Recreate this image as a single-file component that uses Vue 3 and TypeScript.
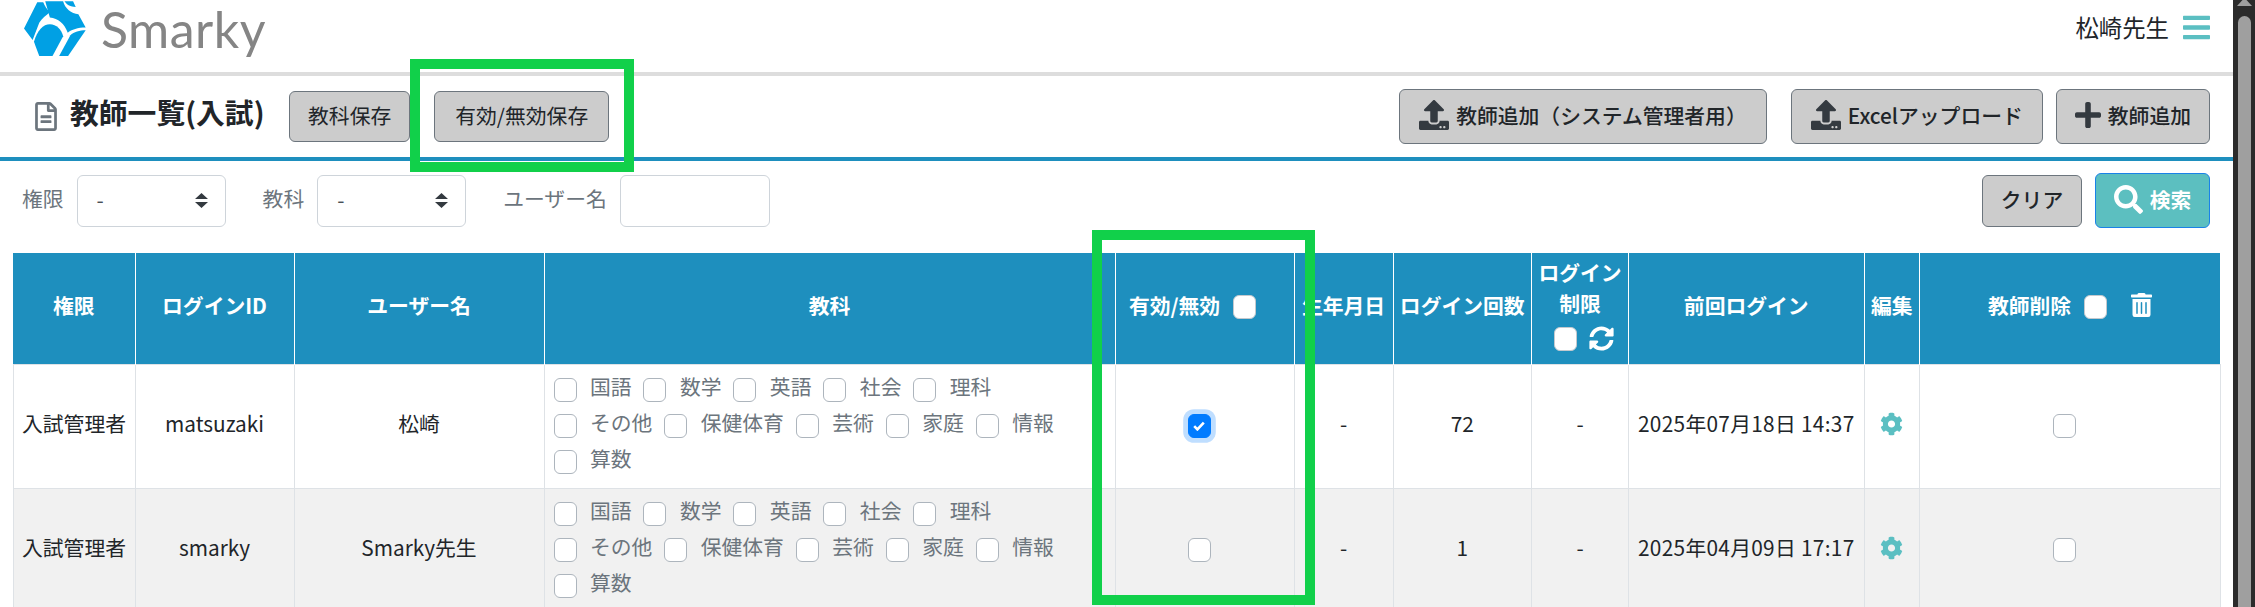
<template>
  <div class="page">
    <div class="main">
      <header class="topbar">
        <div class="logo">
          <svg class="logoMark" viewBox="72 0 190 170">
            <path d="M112 6L130 6C134 16 140 26 150 36C138 46 126 54 118 68L98 120L72 85Z" />
            <path d="M136 3L190 3C195 25 215 40 236 42L258 82C235 82 215 88 204 98C194 70 175 55 150 52C144 32 140 16 136 3Z" />
            <path d="M194 3L220 3L228 20C212 20 202 14 194 3Z" />
            <path d="M102 125C112 90 130 72 150 72C170 72 185 88 190 108L158 168L118 168Z" />
            <path d="M178 168L212 105C222 95 240 90 258 90L205 168Z" />
          </svg>
          <span class="logoText">Smarky</span>
        </div>
        <div class="user">
          <span class="userName">松崎先生</span>
          <svg class="menuIcon" viewBox="0 0 448 512"><path :d="icons.bars" /></svg>
        </div>
      </header>

      <section class="titleBar">
        <svg class="docIcon" viewBox="0 0 384 512"><path :d="icons.file" /></svg>
        <h1 class="title">教師一覧(入試)</h1>
        <button class="btn small first">教科保存</button>
        <button class="btn small second">有効/無効保存</button>
        <div class="grow"></div>
        <button class="btn tall">
          <svg class="upIcon" viewBox="0 0 512 512"><path :d="icons.upload" /></svg>
          教師追加（システム管理者用）
        </button>
        <button class="btn tall excel">
          <svg class="upIcon" viewBox="0 0 512 512"><path :d="icons.upload" /></svg>
          Excelアップロード
        </button>
        <button class="btn tall add">
          <svg class="plusIcon" viewBox="0 0 448 512"><path :d="icons.plus" /></svg>
          教師追加
        </button>
      </section>

      <section class="filters">
        <label class="fieldLabel">権限</label>
        <div class="select">
          <span class="selectValue">-</span>
          <svg class="updown" viewBox="0 0 13 15"><path d="M6.5 0L13 6H0ZM0 9H13L6.5 15Z" /></svg>
        </div>
        <label class="fieldLabel next">教科</label>
        <div class="select">
          <span class="selectValue">-</span>
          <svg class="updown" viewBox="0 0 13 15"><path d="M6.5 0L13 6H0ZM0 9H13L6.5 15Z" /></svg>
        </div>
        <label class="fieldLabel next">ユーザー名</label>
        <input class="textInput" type="text" />
        <div class="grow"></div>
        <button class="btn clear">クリア</button>
        <button class="btn search">
          <svg class="searchIcon" viewBox="0 0 512 512"><path :d="icons.search" /></svg>
          検索
        </button>
      </section>

      <table class="teachers">
        <colgroup>
          <col v-for="(w, i) in colWidths" :key="i" :style="{ width: w + 'px' }" />
        </colgroup>
        <thead>
          <tr>
            <th>権限</th>
            <th>ログインID</th>
            <th>ユーザー名</th>
            <th>教科</th>
            <th>
              <span class="thRow shifted">有効/無効<span class="check onBlue"></span></span>
            </th>
            <th>生年月日</th>
            <th>ログイン回数</th>
            <th>
              <div class="stack">
                <span>ログイン</span>
                <span>制限</span>
                <span class="limitTools">
                  <span class="check onBlue"></span>
                  <svg class="syncIcon" viewBox="0 0 512 512"><path :d="icons.sync" /></svg>
                </span>
              </div>
            </th>
            <th>前回ログイン</th>
            <th>編集</th>
            <th>
              <span class="thRow">
                教師削除<span class="check onBlue"></span>
                <svg class="trashIcon" viewBox="0 0 448 512"><path :d="icons.trash" /></svg>
              </span>
            </th>
          </tr>
        </thead>
        <tbody>
          <tr v-for="row in rows" :key="row.id">
            <td class="txt">入試管理者</td>
            <td class="txt">{{ row.id }}</td>
            <td class="txt">{{ row.name }}</td>
            <td class="subjectCell">
              <div class="subjects">
                <span v-for="s in subjects" :key="s" class="subject">
                  <span class="check"></span>
                  <span class="subjectName">{{ s }}</span>
                </span>
              </div>
            </td>
            <td>
              <div class="cellCheck">
                <span class="check" :class="{ checked: row.active }">
                  <svg v-if="row.active" viewBox="0 0 12 10"><path d="M1.2 5.2L4.4 8.4L10.8 1.6" /></svg>
                </span>
              </div>
            </td>
            <td class="txt">-</td>
            <td class="txt">{{ row.logins }}</td>
            <td class="txt">-</td>
            <td class="txt date">{{ row.lastLogin }}</td>
            <td><svg class="gear" viewBox="0 0 512 512"><path :d="icons.cog" /></svg></td>
            <td>
              <div class="cellCheck"><span class="check"></span></div>
            </td>
          </tr>
        </tbody>
      </table>

      <div class="mark markSave"></div>
      <div class="mark markActive"></div>
    </div>

    <aside class="scrollbar">
      <svg class="scrollArrow" viewBox="0 0 15 6"><path d="M5.5 0H9.5L15 6H0Z" /></svg>
      <div class="thumb"></div>
    </aside>
  </div>
</template>

<script setup lang="ts">
const colWidths = [122, 159, 250, 571, 179, 99, 138.5, 97, 235.5, 55.5, 300.5];

const subjects = ['国語', '数学', '英語', '社会', '理科', 'その他', '保健体育', '芸術', '家庭', '情報', '算数'];

const rows = [
  { id: 'matsuzaki', name: '松崎', active: true, logins: 72, lastLogin: '2025年07月18日 14:37' },
  { id: 'smarky', name: 'Smarky先生', active: false, logins: 1, lastLogin: '2025年04月09日 17:17' },
];

const icons = {
  bars: 'M16 132h416c8.837 0 16-7.163 16-16V76c0-8.837-7.163-16-16-16H16C7.163 60 0 67.163 0 76v40c0 8.837 7.163 16 16 16zm0 160h416c8.837 0 16-7.163 16-16v-40c0-8.837-7.163-16-16-16H16c-8.837 0-16 7.163-16 16v40c0 8.837 7.163 16 16 16zm0 160h416c8.837 0 16-7.163 16-16v-40c0-8.837-7.163-16-16-16H16c-8.837 0-16 7.163-16 16v40c0 8.837 7.163 16 16 16z',
  file: 'M288 248v28c0 6.6-5.4 12-12 12H108c-6.6 0-12-5.4-12-12v-28c0-6.6 5.4-12 12-12h168c6.6 0 12 5.4 12 12zm-12 72H108c-6.6 0-12 5.4-12 12v28c0 6.6 5.4 12 12 12h168c6.6 0 12-5.4 12-12v-28c0-6.6-5.4-12-12-12zm108-188.1V464c0 26.5-21.5 48-48 48H48c-26.5 0-48-21.5-48-48V48C0 21.5 21.5 0 48 0h204.1C264.8 0 277 5.1 286 14.1L369.9 98c9 8.9 14.1 21.2 14.1 33.9zm-128-80V128h76.1L256 51.9zM336 464V176H232c-13.3 0-24-10.7-24-24V48H48v416h288z',
  upload: 'M296 384h-80c-13.3 0-24-10.7-24-24V192h-87.7c-17.8 0-26.7-21.5-14.1-34.1L242.3 5.7c7.5-7.5 19.8-7.5 27.3 0l152.2 152.2c12.6 12.6 3.7 34.1-14.1 34.1H320v168c0 13.3-10.7 24-24 24zm216-8v112c0 13.3-10.7 24-24 24H24c-13.3 0-24-10.7-24-24V376c0-13.3 10.7-24 24-24h136v8c0 30.9 25.1 56 56 56h80c30.9 0 56-25.1 56-56v-8h136c13.3 0 24 10.7 24 24zm-124 88c0-11-9-20-20-20s-20 9-20 20 9 20 20 20 20-9 20-20zm64 0c0-11-9-20-20-20s-20 9-20 20 9 20 20 20 20-9 20-20z',
  plus: 'M416 208H272V64c0-17.67-14.33-32-32-32h-32c-17.67 0-32 14.33-32 32v144H32c-17.67 0-32 14.33-32 32v32c0 17.67 14.33 32 32 32h144v144c0 17.67 14.33 32 32 32h32c17.67 0 32-14.33 32-32V304h144c17.67 0 32-14.33 32-32v-32c0-17.67-14.33-32-32-32z',
  search: 'M505 442.7L405.3 343c-4.5-4.5-10.6-7-17-7H372c27.6-35.3 44-79.7 44-128C416 93.1 322.9 0 208 0S0 93.1 0 208s93.1 208 208 208c48.3 0 92.7-16.4 128-44v16.3c0 6.4 2.5 12.5 7 17l99.7 99.7c9.4 9.4 24.6 9.4 33.9 0l28.3-28.3c9.4-9.4 9.4-24.6.1-34zM208 336c-70.7 0-128-57.2-128-128 0-70.7 57.2-128 128-128 70.7 0 128 57.2 128 128 0 70.7-57.2 128-128 128z',
  sync: 'M370.72 133.28C339.458 104.008 298.888 87.962 255.848 88c-77.458.068-144.328 53.178-162.791 126.85-1.344 5.363-6.122 9.15-11.651 9.15H24.103c-7.498 0-13.194-6.807-11.807-14.176C33.933 94.924 134.813 8 256 8c66.448 0 126.791 26.136 171.315 68.685L463.03 40.97C478.149 25.851 504 36.559 504 57.941V192c0 13.255-10.745 24-24 24H345.941c-21.382 0-32.09-25.851-16.971-40.971l41.75-41.749zM32 296h134.059c21.382 0 32.09 25.851 16.971 40.971l-41.75 41.75c31.262 29.273 71.835 45.319 114.876 45.28 77.418-.07 144.315-53.144 162.787-126.849 1.344-5.363 6.122-9.15 11.651-9.15h57.304c7.498 0 13.194 6.807 11.807 14.176C478.067 417.076 377.187 504 256 504c-66.448 0-126.791-26.136-171.315-68.685L48.97 471.03C33.851 486.149 8 475.441 8 454.059V320c0-13.255 10.745-24 24-24z',
  trash: 'M32 464a48 48 0 0 0 48 48h288a48 48 0 0 0 48-48V128H32zm272-256a16 16 0 0 1 32 0v224a16 16 0 0 1-32 0zm-96 0a16 16 0 0 1 32 0v224a16 16 0 0 1-32 0zm-96 0a16 16 0 0 1 32 0v224a16 16 0 0 1-32 0zM432 32H312l-9.4-18.7A24 24 0 0 0 281.1 0H166.8a23.72 23.72 0 0 0-21.4 13.3L136 32H16A16 16 0 0 0 0 48v32a16 16 0 0 0 16 16h416a16 16 0 0 0 16-16V48a16 16 0 0 0-16-16z',
  cog: 'M487.4 315.7l-42.6-24.6c4.3-23.2 4.3-47 0-70.2l42.6-24.6c4.9-2.8 7.1-8.6 5.5-14-11.1-35.6-30-67.8-54.7-94.6-3.8-4.1-10-5.1-14.8-2.3L380.8 110c-17.9-15.4-38.5-27.3-60.8-35.1V25.8c0-5.6-3.9-10.5-9.4-11.7-36.7-8.2-74.3-7.8-109.2 0-5.5 1.2-9.4 6.1-9.4 11.7V75c-22.2 7.9-42.8 19.8-60.8 35.1L88.7 85.5c-4.9-2.8-11-1.9-14.8 2.3-24.7 26.7-43.6 58.9-54.7 94.6-1.7 5.4.6 11.2 5.5 14L67.3 221c-4.3 23.2-4.3 47 0 70.2l-42.6 24.6c-4.9 2.8-7.1 8.6-5.5 14 11.1 35.6 30 67.8 54.7 94.6 3.8 4.1 10 5.1 14.8 2.3l42.6-24.6c17.9 15.4 38.5 27.3 60.8 35.1v49.2c0 5.6 3.9 10.5 9.4 11.7 36.7 8.2 74.3 7.8 109.2 0 5.5-1.2 9.4-6.1 9.4-11.7v-49.2c22.2-7.9 42.8-19.8 60.8-35.1l42.6 24.6c4.9 2.8 11 1.9 14.8-2.3 24.7-26.7 43.6-58.9 54.7-94.6 1.5-5.5-.7-11.3-5.6-14.1zM256 336c-44.1 0-80-35.9-80-80s35.9-80 80-80 80 35.9 80 80-35.9 80-80 80z',
};
</script>

<style>
html,
body {
  margin: 0;
  overflow: hidden;
}
</style>

<style scoped>
.page {
  display: flex;
  height: 607px;
  overflow: hidden;
  background: #fff;
  font-family: 'Noto Sans CJK JP', sans-serif;
  font-size: 20.8px;
  color: #212529;
}

.main {
  position: relative;
  flex: 1;
  min-width: 0;
}

.grow { flex: 1; }

.topbar {
  display: flex;
  justify-content: space-between;
  height: 72px;
  padding: 0 23px 0 24px;
  border-bottom: 4px solid #ddd;
}

.logo {
  display: flex;
  align-items: flex-start;
}

.logoMark {
  width: 63px;
  height: 57px;
  fill: #00a0e4;
}

.logoText {
  margin-left: 14px;
  font-family: Lato, sans-serif;
  font-size: 50px;
  line-height: 58px;
  letter-spacing: 0.5px;
  color: #858585;
}

.user {
  display: flex;
  align-items: center;
  gap: 14px;
  height: 31px;
  margin-top: 12px;
}

.userName {
  font-size: 23.4px;
  line-height: 31px;
}

.menuIcon {
  width: 27px;
  height: 31px;
  fill: #5bbfc2;
}

.titleBar {
  display: flex;
  align-items: center;
  height: 81px;
  padding: 0 23px 0 35px;
  border-bottom: 4px solid #1e8fbe;
}

.docIcon {
  width: 22px;
  height: 29px;
  fill: #6c757d;
}

.title {
  margin: 0 24.5px 10px 13px;
  font-size: 28.8px;
  font-weight: 700;
  line-height: 40px;
}

.btn {
  display: flex;
  align-items: center;
  justify-content: center;
  box-sizing: border-box;
  padding: 0 19px 4px;
  border: 1px solid #6c757d;
  border-radius: 6px;
  background: #ccc;
  color: #212529;
  font-family: inherit;
  font-size: 20.8px;
  white-space: nowrap;
}

.small { height: 51px; }
.small.first { padding: 0 18px 4px; }
.small.second { margin-left: 24px; padding: 0 20px 4px; }
.tall { height: 55px; font-weight: 500; }
.excel { margin-left: 24px; }
.add { margin-left: 13px; padding: 0 18px 4px; }

.upIcon {
  width: 30px;
  height: 30px;
  margin-right: 7px;
  fill: #343a40;
}

.plusIcon {
  width: 26px;
  height: 30px;
  margin-right: 7px;
  fill: #343a40;
}

.filters {
  display: flex;
  align-items: center;
  height: 55px;
  margin: 12px 23px 25px 22px;
}

.fieldLabel {
  margin: 0 13px 6px 0;
  color: #6c757d;
}

.fieldLabel.next { margin-left: 37px; }

.select {
  display: flex;
  align-items: center;
  justify-content: space-between;
  box-sizing: border-box;
  width: 149px;
  height: 52px;
  padding: 0 17px 0 19px;
  border: 1px solid #ced4da;
  border-radius: 6px;
  color: #495057;
}

.selectValue { margin-bottom: 4px; }

.updown {
  width: 13px;
  height: 15px;
  fill: #343a40;
}

.textInput {
  box-sizing: border-box;
  width: 150px;
  height: 52px;
  border: 1px solid #ced4da;
  border-radius: 6px;
  background: #fff;
}

.clear {
  width: 100px;
  height: 52px;
  padding: 0 0 4px;
  font-weight: 500;
}

.search {
  width: 115px;
  height: 55px;
  margin-left: 13px;
  padding: 0 0 3px;
  border: 1.5px solid #1a82e8;
  background: #5cbfc0;
  color: #fff;
  font-weight: 700;
}

.searchIcon {
  width: 29px;
  height: 29px;
  margin-right: 7px;
  fill: #fff;
}

.teachers {
  width: 2207.5px;
  margin-left: 12.5px;
  table-layout: fixed;
  border-collapse: collapse;
}

.teachers th {
  box-sizing: border-box;
  height: 111px;
  padding: 0 0 6px;
  border-left: 1px solid #fff;
  border-right: 1px solid #fff;
  background: #1e8fbe;
  color: #fff;
  font-weight: 700;
  text-align: center;
  vertical-align: middle;
  white-space: nowrap;
}

.teachers th:first-child { border-left: 0; }
.teachers th:last-child { border-right: 0; }

.teachers td {
  box-sizing: border-box;
  height: 124px;
  padding: 0;
  border: 1px solid #dee2e6;
  text-align: center;
  vertical-align: middle;
  white-space: nowrap;
}

.teachers td.txt { padding-bottom: 6px; }
.teachers td.date { letter-spacing: 0.3px; }

.teachers tbody tr:nth-child(2) td { background: #f1f1f1; }

.thRow {
  display: inline-flex;
  align-items: center;
  gap: 13px;
}

.thRow .check { margin-top: 4px; }

.thRow.shifted { margin-right: 24px; }

.stack {
  display: flex;
  flex-direction: column;
  align-items: center;
  line-height: 31px;
  padding-bottom: 2px;
}

.limitTools {
  display: flex;
  align-items: center;
  gap: 12px;
  margin: 7px 0 0 7px;
}

.check {
  display: inline-flex;
  align-items: center;
  justify-content: center;
  flex: none;
  box-sizing: border-box;
  width: 23px;
  height: 24px;
  border: 1px solid #adb5bd;
  border-radius: 6px;
  background: #fff;
}

.check.onBlue { border-color: #c4c9ce; }

.cellCheck {
  display: flex;
  justify-content: center;
  padding-right: 11px;
}

.check.checked {
  border-color: #007bff;
  background: #007bff;
  box-shadow: 0 0 0 4.8px rgba(0, 123, 255, 0.25);
}

.check svg {
  width: 12px;
  height: 10px;
  fill: none;
  stroke: #fff;
  stroke-width: 2.6;
}

.syncIcon {
  width: 25px;
  height: 25px;
  fill: #fff;
}

.trashIcon {
  width: 21px;
  height: 24px;
  margin-left: 11px;
  fill: #fff;
}

.gear {
  display: block;
  width: 23px;
  height: 24px;
  margin: 0 auto 5px;
  fill: #5bbfc2;
}

.teachers td.subjectCell {
  padding: 0 20px 0 9px;
  text-align: left;
  white-space: normal;
}

.subjects {
  display: flex;
  flex-wrap: wrap;
  row-gap: 12px;
}

.subject {
  display: flex;
  align-items: center;
  height: 24px;
  margin-right: 12px;
}

.subjectName {
  margin: 0 0 8px 13.4px;
  color: #6c757d;
  line-height: 24px;
  white-space: nowrap;
}

.mark {
  position: absolute;
  box-sizing: border-box;
  border: 10px solid #11d04a;
  pointer-events: none;
}

.markSave {
  left: 410px;
  top: 59px;
  width: 224px;
  height: 113px;
}

.markActive {
  left: 1092px;
  top: 230px;
  width: 223px;
  height: 375px;
}

.scrollbar {
  display: flex;
  flex: none;
  flex-direction: column;
  box-sizing: border-box;
  width: 22px;
  padding: 0 4px 0 5px;
  background: #2b2b2b;
}

.scrollArrow {
  flex: none;
  width: 15px;
  height: 6px;
  margin-left: -1px;
  fill: #9f9f9f;
}

.thumb {
  flex: 1;
  margin-top: 10px;
  border-radius: 7px 7px 0 0;
  background: #9f9f9f;
}
</style>
